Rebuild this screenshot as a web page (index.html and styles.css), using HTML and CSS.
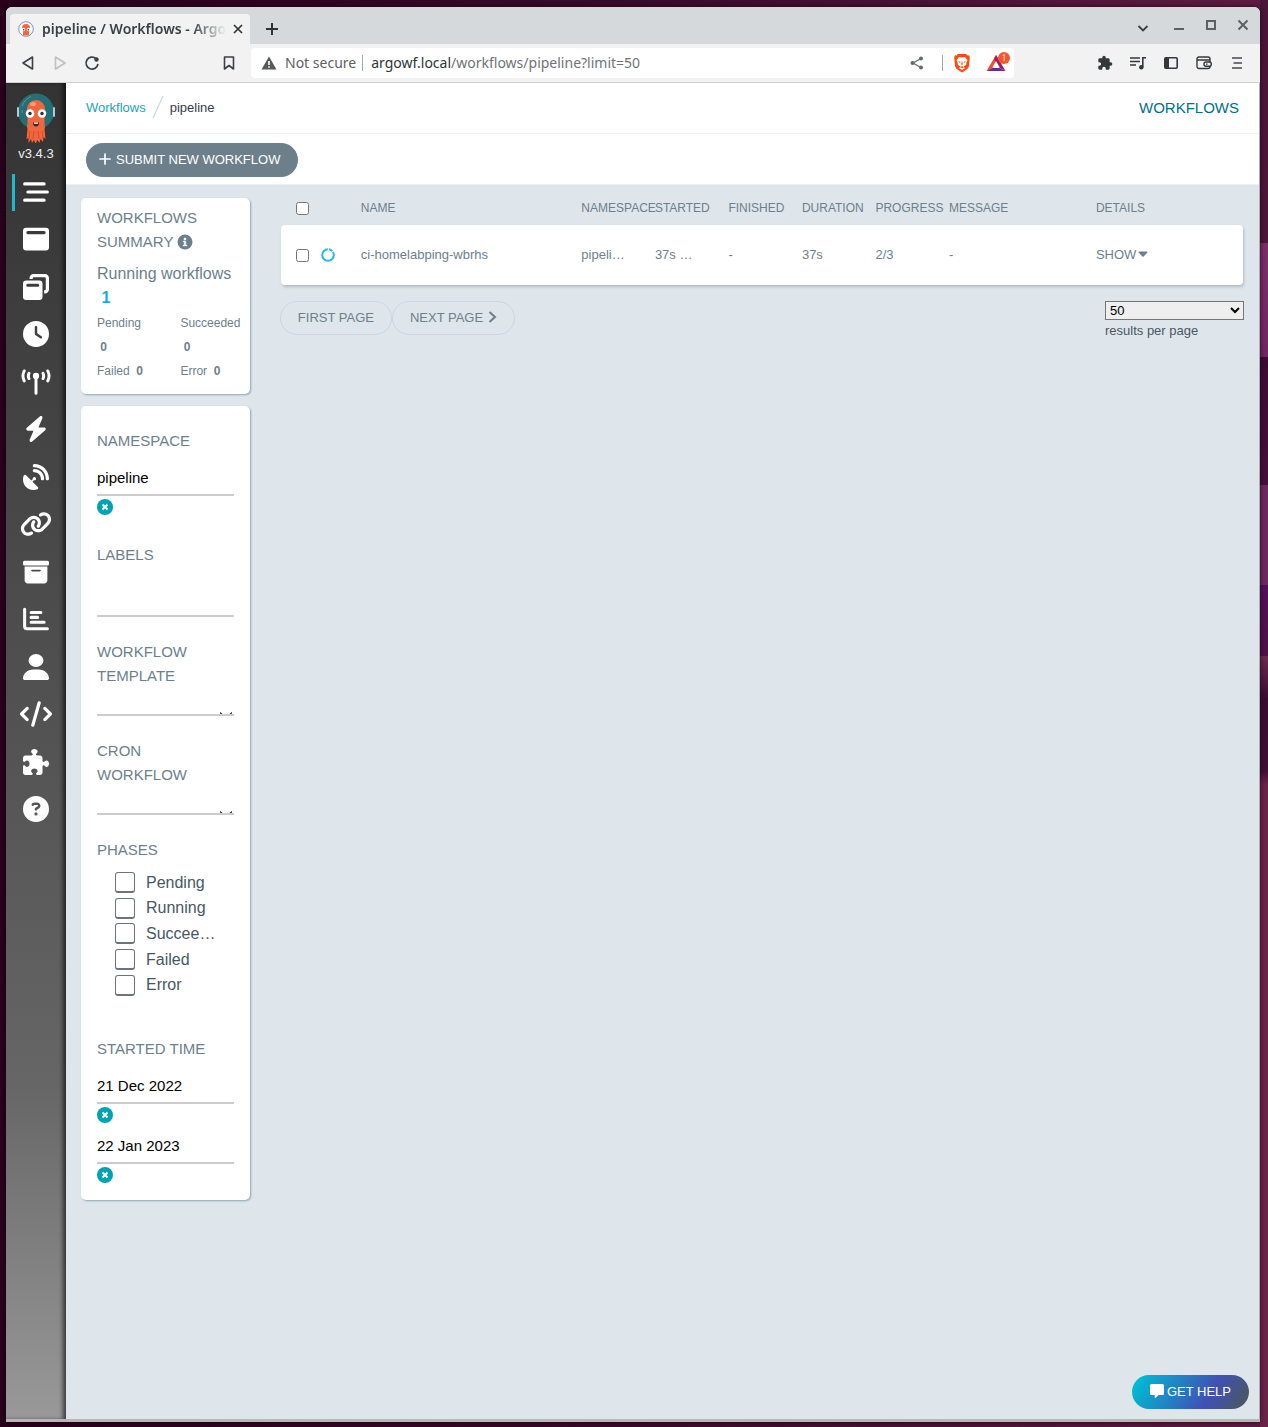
FILE: index.html
```html
<!DOCTYPE html>
<html lang="en">
<head>
<meta charset="utf-8">
<title>pipeline / Workflows - Argo</title>
<link rel="stylesheet" href="styles.css">
</head>
<body>
<div class="window">
  <header class="tabstrip">
    <div class="tab">
      <svg class="tab-icon" width="16" height="16" viewBox="0 0 16 16"><circle cx="8" cy="8" r="7.300" fill="#fff" stroke="#8d86c9"/><path d="M4 7a4 4 0 0 1 8 0c0 2-1 3-1 4v3.500H5V11c0-1-1-2-1-4z" fill="#f2683c"/><circle cx="5.500" cy="8.500" r="1.800" fill="#fff"/><circle cx="10.500" cy="8.500" r="1.800" fill="#fff"/><circle cx="5.700" cy="8.700" r=".8" fill="#333"/><circle cx="10.300" cy="8.700" r=".8" fill="#333"/></svg>
      <span class="tab-title">pipeline / Workflows - Argo</span>
      <button class="chrome-btn tab-close" aria-label="Close tab"><svg width="10" height="10" viewBox="0 0 10 10" fill="none" stroke="#2e3436" stroke-width="1.700"><path d="M1 1l8 8M9 1L1 9"/></svg></button>
    </div>
    <button class="chrome-btn new-tab" aria-label="New tab"><svg width="12" height="12" viewBox="0 0 12 12" fill="none" stroke="#2e3436" stroke-width="2"><path d="M6 0v12M0 6h12"/></svg></button>
    <div class="window-controls">
      <button class="chrome-btn tab-search" aria-label="Search tabs"><svg width="12" height="12" viewBox="0 0 12 12" fill="none" stroke="#3b4043" stroke-width="1.800"><path d="M1.500 5l4.500 4.500L10.500 5"/></svg></button>
      <button class="chrome-btn" aria-label="Minimize"><svg width="12" height="12" viewBox="0 0 12 12"><path d="M1 9h10v2H1z" fill="#5c6063"/></svg></button>
      <button class="chrome-btn" aria-label="Maximize"><svg width="12" height="12" viewBox="0 0 12 12"><path d="M2 2h8v8H2z" fill="none" stroke="#5c6063" stroke-width="2"/></svg></button>
      <button class="chrome-btn" aria-label="Close"><svg width="12" height="12" viewBox="0 0 12 12" fill="none" stroke="#5c6063" stroke-width="2"><path d="M1.500 1.500l9 9M10.500 1.500l-9 9"/></svg></button>
    </div>
  </header>

  <div class="browser-bar">
    <div class="nav-buttons">
      <button class="chrome-btn" aria-label="Back"><svg width="16" height="16" viewBox="0 0 16 16" fill="none" stroke="#3b4043" stroke-width="1.600" stroke-linejoin="round"><path d="M12.500 2v12L3 8z"/></svg></button>
      <button class="chrome-btn" aria-label="Forward" disabled><svg width="16" height="16" viewBox="0 0 16 16" fill="none" stroke="#bdbfc0" stroke-width="1.600" stroke-linejoin="round"><path d="M3.500 2v12L13 8z"/></svg></button>
      <button class="chrome-btn" aria-label="Reload"><svg width="16" height="16" viewBox="0 0 16 16" fill="none" stroke="#3b4043" stroke-width="1.700"><path d="M14 9a6 6 0 1 1-2-5.500"/><circle cx="12.500" cy="4.500" r="2.200" fill="#3b4043" stroke="none"/></svg></button>
    </div>
    <button class="chrome-btn" aria-label="Bookmark"><svg width="16" height="16" viewBox="0 0 16 16" fill="none" stroke="#3b4043" stroke-width="1.600" stroke-linejoin="round"><path d="M3.500 2h9v12L8 10.500 3.500 14z"/></svg></button>
    <div class="address">
      <svg width="16" height="14" viewBox="0 0 16 14"><path d="M8 .5L15.500 13.500H.5z" fill="#55595c"/><path d="M7.200 5h1.600v4H7.200zM7.200 10.200h1.600v1.600H7.200z" fill="#fff"/></svg>
      <span class="not-secure">Not secure</span>
      <span class="url"><b>argowf.local</b>/workflows/pipeline?limit=50</span>
      <button class="chrome-btn share" aria-label="Share"><svg width="14" height="14" viewBox="0 0 14 14"><path d="M11 2.500L3 7l8 4.500" fill="none" stroke="#666a6d" stroke-width="1.300"/><circle cx="11" cy="2.500" r="2" fill="#666a6d"/><circle cx="2.500" cy="7" r="2" fill="#666a6d"/><circle cx="11" cy="11.500" r="2" fill="#666a6d"/></svg></button>
      <span class="address-sep"></span>
      <button class="chrome-btn" aria-label="Shields"><svg width="18" height="20" viewBox="0 0 18 20"><path d="M5 1h8l1.500 1.500 1.500-.2.8 2L16 13q-.5 2-2.500 3.500L9 19.500l-4.500-3Q2.500 15 2 13L1.200 4.300l.8-2 1.500.2z" fill="#fb4a0a"/><path d="M9 4.500L6 4 3.500 7l1 2.500L5 12l2.500 1.500L6 15l3 2 3-2-1.500-1.500L13 12l.5-2.500 1-2.500L12 4z" fill="#fff"/><path d="M5 8l2.500.7L7 10zM13 8l-2.500.7.500 1.300zM9 8l.8 3-.8 1.500-.8-1.500zM7 14l2-.8 2 .8-2 1.200z" fill="#fb4a0a"/></svg></button>
      <button class="chrome-btn rewards" aria-label="Rewards"><svg width="20" height="18" viewBox="0 0 20 18"><path d="M10 1l3 5-6 8-6.500 3z" fill="#ff4724"/><path d="M10 1l9.500 16-6-3L8 5z" fill="#9e1f63"/><path d="M.5 17h19l-6-3h-7z" fill="#662d91"/><path d="M10 7l3.800 6.500H6.200z" fill="#fff"/></svg><span class="badge">1</span></button>
    </div>
    <div class="extensions">
      <button class="chrome-btn" aria-label="Extensions"><svg width="16" height="16" viewBox="0 0 24 24" fill="#33383b"><path d="M20.500 11H19V7c0-1.100-.9-2-2-2h-4V3.500a2.500 2.500 0 0 0-5 0V5H4c-1.100 0-2 .9-2 2v3.800h1.500a2.700 2.700 0 0 1 0 5.400H2V20c0 1.100.9 2 2 2h3.800v-1.500a2.700 2.700 0 0 1 5.400 0V22H17c1.100 0 2-.9 2-2v-4h1.500a2.500 2.500 0 0 0 0-5z"/></svg></button>
      <button class="chrome-btn" aria-label="Playlist"><svg width="16" height="14" viewBox="0 0 16 14" fill="none" stroke="#33383b" stroke-width="1.600"><path d="M0 2h10M0 5.500h10M0 9h6"/><path d="M12.800 11V1.800H16"/><circle cx="11.300" cy="11.200" r="2.200" fill="#33383b" stroke="none"/></svg></button>
      <button class="chrome-btn" aria-label="Sidebar"><svg width="14" height="12" viewBox="0 0 14 12"><rect x=".8" y=".8" width="12.400" height="10.400" rx="1" fill="none" stroke="#33383b" stroke-width="1.600"/><path d="M1 1h4v10H1z" fill="#33383b"/></svg></button>
      <button class="chrome-btn" aria-label="Wallet"><svg width="16" height="14" viewBox="0 0 16 14" fill="none" stroke="#33383b" stroke-width="1.400"><rect x="1" y="1" width="13" height="11.500" rx="2"/><path d="M1 4h13"/><rect x="8" y="6" width="7.300" height="4.200" rx="2" fill="#f2f2f2"/><path d="M10 8.100h1.500"/></svg></button>
      <button class="chrome-btn" aria-label="Menu"><svg width="12" height="14" viewBox="0 0 12 14" fill="none" stroke="#45494c" stroke-width="1.700"><path d="M1 2h10M2.500 7H11M1 12h10"/></svg></button>
    </div>
  </div>

  <div class="app">
    <aside class="sidebar">
      <svg class="logo" width="38" height="50" viewBox="0 0 38 50"><circle cx="19" cy="18.500" r="18" fill="#256e74"/><path d="M5 13Q8 6 14 3.500M5 20v-3" stroke="#58979b" fill="none"/><rect x="0" y="14" width="2" height="10" rx="1" fill="#b5c7d8"/><rect x="36" y="14" width="2" height="10" rx="1" fill="#b5c7d8"/><path d="M10 16a9 9 0 0 1 18 0c0 6-.5 9-.5 13 0 4 1 6 0 7l1 10-2-2-.5 5-2.500-3-1 4-2-3-2 4-1.500-4-2 3-1-4-2.500 4 0-5-2 1 1-10c-1-2 0-4 0-8 0-5-.5-8-.5-12z" fill="#f0673f"/><path d="M13 38l-1 8M17 38l-1 8M21 38l1 8M25 38l1 7" stroke="#c94722" stroke-width=".8"/><ellipse cx="16" cy="11" rx="3" ry="2" fill="#f79a78"/><circle cx="13" cy="20.500" r="4.300" fill="#fff"/><circle cx="25" cy="20.500" r="4.300" fill="#fff"/><circle cx="13" cy="20.500" r="1.700" fill="#263238"/><circle cx="25" cy="20.500" r="1.700" fill="#263238"/><path d="M16 29.500h6q0 4-3 4t-3-4z" fill="#37272a"/><path d="M17 29.500h4v1.300h-4z" fill="#fff"/></svg>
      <div class="version">v3.4.3</div>
      <nav class="side-nav">
        <a href="#" class="active" aria-label="Workflows"><svg width="26" height="26" viewBox="0 0 512 512" fill="none" stroke="#fff" stroke-width="60" stroke-linecap="round"><path d="M32 96h384M96 256h384M32 416h384"/></svg></a>
        <a href="#" aria-label="Workflow templates"><svg width="26" height="26" viewBox="0 0 512 512" fill="#fff"><path fill-rule="evenodd" d="M64 32h384a64 64 0 0 1 64 64v320a64 64 0 0 1-64 64H64a64 64 0 0 1-64-64V96a64 64 0 0 1 64-64zM96 100a30 30 0 0 0 0 60h320a30 30 0 0 0 0-60z"/></svg></a>
        <a href="#" aria-label="Cluster workflow templates"><svg width="26" height="26" viewBox="0 0 512 512" fill="#fff"><path d="M432 64H208c-8.800 0-16 7.200-16 16v16h-64V80c0-44.200 35.800-80 80-80h224c44.200 0 80 35.800 80 80v224c0 44.200-35.800 80-80 80h-16v-64h16c8.800 0 16-7.200 16-16V80c0-8.800-7.200-16-16-16z"/><path fill-rule="evenodd" d="M64 128h256a64 64 0 0 1 64 64v256a64 64 0 0 1-64 64H64a64 64 0 0 1-64-64V192a64 64 0 0 1 64-64zM94 192a30 30 0 0 0 0 60h196a30 30 0 0 0 0-60z"/></svg></a>
        <a href="#" aria-label="Cron workflows"><svg width="26" height="26" viewBox="0 0 512 512" fill="#fff"><path fill-rule="evenodd" d="M256 0a256 256 0 1 1 0 512A256 256 0 1 1 256 0zM232 120V256c0 8 4 15.500 10.700 20l96 64c11 7.400 25.900 4.400 33.300-6.700s4.400-25.900-6.700-33.300L280 243.200V120c0-13.300-10.700-24-24-24s-24 10.700-24 24z"/></svg></a>
        <a href="#" aria-label="Event flow"><svg width="30" height="26" viewBox="0 0 576 512" fill="none" stroke="#fff" stroke-width="58" stroke-linecap="round"><path d="M56 38C24 100 24 172 56 234M520 38c32 62 32 134 0 196M150 84c-18 36-18 68 0 104M426 84c18 36 18 68 0 104M288 150v330"/><circle cx="288" cy="136" r="62" fill="#fff" stroke="none"/></svg></a>
        <a href="#" aria-label="Event sources"><svg width="24" height="26" viewBox="0 0 448 512" fill="#fff"><path d="M349.400 44.600c5.900-13.700 1.500-29.700-10.600-38.500s-28.600-8-39.900 1.800l-256 224c-10 8.800-13.600 22.900-8.900 35.300S50.700 288 64 288H175.500L98.600 467.400c-5.900 13.700-1.500 29.700 10.600 38.500s28.600 8 39.900-1.800l256-224c10-8.800 13.600-22.900 8.900-35.300s-16.600-20.700-30-20.700H272.500L349.400 44.600z"/></svg></a>
        <a href="#" aria-label="Sensors"><svg width="26" height="26" viewBox="0 0 512 512" fill="#fff"><path d="M192 32c0-17.700 14.300-32 32-32C383.100 0 512 128.900 512 288c0 17.700-14.300 32-32 32s-32-14.300-32-32C448 164.300 347.700 64 224 64c-17.700 0-32-14.300-32-32zM60.600 220.600L164.700 324.700l28.400-28.400c-.7-2.600-1.100-5.400-1.100-8.300c0-17.700 14.300-32 32-32s32 14.300 32 32s-14.300 32-32 32c-2.900 0-5.600-.4-8.300-1.100l-28.400 28.400L291.400 451.400c14.500 14.500 11.800 38.800-7.300 46.300C260.500 506.900 234.900 512 208 512C93.100 512 0 418.900 0 304c0-26.900 5.100-52.500 14.400-76.100c7.500-19 31.800-21.800 46.300-7.300zM224 96c106 0 192 86 192 192c0 17.700-14.300 32-32 32s-32-14.300-32-32c0-70.700-57.300-128-128-128c-17.700 0-32-14.300-32-32s14.300-32 32-32z"/></svg></a>
        <a href="#" aria-label="Pipelines"><svg width="32" height="26" viewBox="0 0 640 512" fill="#fff"><path d="M579.800 267.700c56.500-56.500 56.500-148 0-204.500c-50-50-128.800-56.500-186.300-15.400l-1.600 1.100c-14.400 10.300-17.700 30.300-7.400 44.600s30.300 17.700 44.600 7.400l1.600-1.100c32.100-22.900 76-19.300 103.800 8.600c31.500 31.500 31.500 82.500 0 114L422.300 334.800c-31.500 31.500-82.500 31.500-114 0c-27.900-27.900-31.500-71.800-8.600-103.800l1.100-1.600c10.300-14.400 6.900-34.400-7.400-44.600s-34.400-6.900-44.600 7.400l-1.100 1.600C206.500 251.200 213 330 263 380c56.500 56.500 148 56.500 204.500 0L579.800 267.700zM60.200 244.300c-56.500 56.500-56.500 148 0 204.500c50 50 128.800 56.500 186.300 15.400l1.600-1.100c14.400-10.300 17.700-30.300 7.400-44.600s-30.300-17.700-44.600-7.400l-1.600 1.100c-32.100 22.900-76 19.300-103.800-8.600C74 372 74 321 105.500 289.500L217.700 177.200c31.500-31.500 82.500-31.500 114 0c27.900 27.900 31.500 71.800 8.600 103.900l-1.100 1.600c-10.300 14.400-6.900 34.400 7.400 44.600s34.400 6.900 44.600-7.400l1.100-1.600C433.500 260.800 427 182 377 132c-56.500-56.500-148-56.500-204.500 0L60.200 244.300z"/></svg></a>
        <a href="#" aria-label="Archived workflows"><svg width="26" height="26" viewBox="0 0 512 512" fill="#fff"><path fill-rule="evenodd" d="M32 32H480c17.700 0 32 14.300 32 32V96c0 17.700-14.300 32-32 32H32C14.300 128 0 113.700 0 96V64C0 46.300 14.300 32 32 32zm0 116H480V416c0 35.300-28.700 64-64 64H96c-35.300 0-64-28.700-64-64V148zm128 80c0 8.800 7.200 16 16 16H336c8.800 0 16-7.200 16-16s-7.200-16-16-16H176c-8.800 0-16 7.200-16 16z"/></svg></a>
        <a href="#" aria-label="Reports"><svg width="26" height="26" viewBox="0 0 512 512" fill="none" stroke="#fff" stroke-width="60" stroke-linecap="round" stroke-linejoin="round"><path d="M32 64v336q0 48 48 48h400M160 128h192M160 224h128M160 320h256"/></svg></a>
        <a href="#" aria-label="User"><svg width="26" height="26" viewBox="0 0 448 512" preserveAspectRatio="none" fill="#fff"><path d="M224 256A128 128 0 1 0 224 0a128 128 0 1 0 0 256zm-45.700 48C79.800 304 0 383.800 0 482.300C0 498.700 13.300 512 29.700 512H418.300c16.400 0 29.700-13.300 29.700-29.700C448 383.800 368.200 304 269.700 304H178.300z"/></svg></a>
        <a href="#" aria-label="API docs"><svg width="32" height="26" viewBox="0 0 640 512" fill="#fff"><path d="M392.800 1.200c-17-4.900-34.700 5-39.600 22l-128 448c-4.900 17 5 34.700 22 39.600s34.700-5 39.600-22l128-448c4.900-17-5-34.700-22-39.600zm80.600 120.100c-12.500 12.500-12.500 32.800 0 45.300L562.700 256l-89.400 89.400c-12.500 12.500-12.500 32.800 0 45.300s32.800 12.500 45.300 0l112-112c12.500-12.500 12.500-32.800 0-45.300l-112-112c-12.500-12.500-32.800-12.500-45.300 0zm-306.700 0c-12.500-12.500-32.800-12.500-45.300 0l-112 112c-12.500 12.500-12.500 32.800 0 45.300l112 112c12.500 12.500 32.800 12.500 45.300 0s12.500-32.800 0-45.300L77.300 256l89.400-89.400c12.500-12.500 12.500-32.800 0-45.300z"/></svg></a>
        <a href="#" aria-label="Plugins"><svg width="26" height="26" viewBox="0 0 512 512" fill="#fff"><path d="M192 104.800c0-9.200-5.800-17.300-13.200-22.800C167.200 73.300 160 61.300 160 48c0-26.500 28.700-48 64-48s64 21.500 64 48c0 13.300-7.200 25.300-18.800 34c-7.400 5.500-13.200 13.600-13.200 22.800v0c0 12.800 10.400 23.200 23.200 23.200H336c26.500 0 48 21.500 48 48v56.800c0 12.800 10.400 23.200 23.200 23.200v0c9.200 0 17.300-5.800 22.800-13.200c8.700-11.600 20.700-18.800 34-18.800c26.500 0 48 28.700 48 64s-21.500 64-48 64c-13.300 0-25.300-7.200-34-18.800c-5.500-7.400-13.600-13.200-22.800-13.200v0c-12.800 0-23.200 10.400-23.200 23.200V464c0 26.500-21.500 48-48 48H279.200c-12.800 0-23.200-10.400-23.200-23.200v0c0-9.200 5.800-17.300 13.200-22.800c11.600-8.700 18.800-20.700 18.800-34c0-26.500-28.700-48-64-48s-64 21.500-64 48c0 13.300 7.200 25.300 18.800 34c7.400 5.500 13.200 13.600 13.200 22.800v0c0 12.800-10.400 23.200-23.200 23.200H48c-26.500 0-48-21.500-48-48V343.200C0 330.400 10.400 320 23.200 320v0c9.200 0 17.300 5.800 22.800 13.200C54.700 344.800 66.700 352 80 352c26.500 0 48-28.700 48-64s-21.500-64-48-64c-13.300 0-25.300 7.200-34 18.800C40.500 250.200 32.400 256 23.200 256v0C10.400 256 0 245.600 0 232.800V176c0-26.500 21.500-48 48-48H168.800c12.800 0 23.200-10.400 23.200-23.200v0z"/></svg></a>
        <a href="#" aria-label="Help"><svg width="26" height="26" viewBox="0 0 512 512" fill="#fff"><path fill-rule="evenodd" d="M256 512A256 256 0 1 0 256 0a256 256 0 1 0 0 512zM169.800 165.300c7.900-22.300 29.100-37.300 52.800-37.300h58.300c34.900 0 63.100 28.300 63.100 63.100c0 22.600-12.100 43.500-31.700 54.800L280 264.400c-.2 13-10.900 23.600-24 23.600c-13.300 0-24-10.700-24-24V250.500c0-8.600 4.600-16.500 12.100-20.800l44.300-25.400c4.700-2.700 7.600-7.700 7.600-13.100c0-8.400-6.800-15.100-15.100-15.100H222.600c-3.400 0-6.400 2.100-7.500 5.300l-.4 1.200c-4.400 12.500-18.200 19-30.600 14.600s-19-18.200-14.600-30.600l.4-1.200zM224 352a32 32 0 1 1 64 0 32 32 0 1 1 -64 0z"/></svg></a>
      </nav>
    </aside>

    <main class="main">
      <div class="topbar">
        <nav class="breadcrumb"><a href="#">Workflows</a><svg width="12" height="24" viewBox="0 0 12 24"><path d="M1 23L11 1" stroke="#ccd6dd" stroke-width="1.200"/></svg><span>pipeline</span></nav>
        <span class="page-title">WORKFLOWS</span>
      </div>
      <div class="actions">
        <button class="pill primary"><svg width="12" height="12" viewBox="0 0 12 12" stroke="#fff" stroke-width="1.700" stroke-linecap="round"><path d="M6 1v10M1 6h10"/></svg>SUBMIT NEW WORKFLOW</button>
      </div>
      <div class="content">
        <div class="filters">
          <section class="card summary">
            <h2>WORKFLOWS SUMMARY <svg class="info" width="16" height="16" viewBox="0 0 16 16"><circle cx="8" cy="8" r="7.500" fill="#6d7f8b"/><path d="M6.300 7h2.500v4H10v1H6v-1h1.200V8h-.9zM7 4h2v2H7z" fill="#fff" stroke="#fff" stroke-width=".4"/></svg></h2>
            <p class="running">Running workflows <b>&nbsp;1</b></p>
            <div class="counts">
              <div>Pending <b>&nbsp;0</b></div>
              <div>Succeeded <b>&nbsp;0</b></div>
              <div>Failed <b>&nbsp;0</b></div>
              <div>Error <b>&nbsp;0</b></div>
            </div>
          </section>
          <form class="card filter-form">
            <div class="field">
              <label for="namespace">NAMESPACE</label>
              <input class="line-input spaced" id="namespace" type="text" value="pipeline">
              <button type="button" class="clear" aria-label="Clear namespace"><svg width="16" height="16" viewBox="0 0 16 16"><circle cx="8" cy="8" r="8" fill="#00a2b3"/><path d="M5.500 5.500l5 5M10.500 5.500l-5 5" stroke="#fff" stroke-width="2"/></svg></button>
            </div>
            <div class="field">
              <label for="labels">LABELS</label>
              <input class="line-input tags" id="labels" type="text">
            </div>
            <div class="field">
              <label for="template">WORKFLOW TEMPLATE</label>
              <div class="select-wrap"><select class="line-select" id="template"><option></option></select><svg width="12" height="2" viewBox="0 0 12 2" fill="none" stroke="#333" stroke-width="1.400"><path d="M0 .5l6 6 6-6"/></svg></div>
            </div>
            <div class="field">
              <label for="cron">CRON WORKFLOW</label>
              <div class="select-wrap"><select class="line-select" id="cron"><option></option></select><svg width="12" height="2" viewBox="0 0 12 2" fill="none" stroke="#333" stroke-width="1.400"><path d="M0 .5l6 6 6-6"/></svg></div>
            </div>
            <fieldset class="field">
              <legend>PHASES</legend>
              <div class="phases">
                <label><input type="checkbox"><span>Pending</span></label>
                <label><input type="checkbox"><span>Running</span></label>
                <label><input type="checkbox"><span>Succeeded</span></label>
                <label><input type="checkbox"><span>Failed</span></label>
                <label><input type="checkbox"><span>Error</span></label>
              </div>
            </fieldset>
            <div class="field">
              <label for="started-from">STARTED TIME</label>
              <input class="line-input spaced" id="started-from" type="text" value="21 Dec 2022">
              <button type="button" class="clear" aria-label="Clear start date"><svg width="16" height="16" viewBox="0 0 16 16"><circle cx="8" cy="8" r="8" fill="#00a2b3"/><path d="M5.500 5.500l5 5M10.500 5.500l-5 5" stroke="#fff" stroke-width="2"/></svg></button>
              <input class="line-input" aria-label="Started before" type="text" value="22 Jan 2023">
              <button type="button" class="clear" aria-label="Clear end date"><svg width="16" height="16" viewBox="0 0 16 16"><circle cx="8" cy="8" r="8" fill="#00a2b3"/><path d="M5.500 5.500l5 5M10.500 5.500l-5 5" stroke="#fff" stroke-width="2"/></svg></button>
            </div>
          </form>
        </div>

        <div class="list">
          <table class="workflows">
            <thead>
              <tr><th><input type="checkbox" aria-label="Select all"></th><th>NAME</th><th>NAMESPACE</th><th>STARTED</th><th>FINISHED</th><th>DURATION</th><th>PROGRESS</th><th>MESSAGE</th><th>DETAILS</th></tr>
            </thead>
            <tbody>
              <tr><td><input type="checkbox" aria-label="Select ci-homelabping-wbrhs"><svg width="14" height="14" viewBox="0 0 14 14" fill="none" stroke="#2ab7ee" stroke-width="2"><circle cx="7" cy="7" r="5.800" stroke-dasharray="26.500 1.200 3.500 1.200 4.100 0"/></svg></td><td>ci-homelabping-wbrhs</td><td><span class="clip">pipeline</span></td><td><span class="clip">37s ago</span></td><td>-</td><td>37s</td><td>2/3</td><td>-</td><td><a class="show" href="#">SHOW<svg width="10" height="6" viewBox="0 0 10 6"><path d="M1.200.5h7.600q1 .4.400 1.300L5.600 5.400q-.6.500-1.200 0L.8 1.800Q.2.900 1.200.5z" fill="#6d7f8b"/></svg></a></td></tr>
            </tbody>
          </table>
          <div class="pagination">
            <div class="pages">
              <button class="pill outline">FIRST PAGE</button><button class="pill outline">NEXT PAGE <svg width="9" height="12" viewBox="0 0 9 12" fill="none" stroke="#6d7f8b" stroke-width="2"><path d="M1.500 1L7 6l-5.500 5"/></svg></button>
            </div>
            <div class="per-page">
              <select id="limit"><option>50</option></select>
              <label for="limit">results per page</label>
            </div>
          </div>
        </div>
      </div>
    </main>
    <button class="pill help"><svg width="14" height="14" viewBox="0 0 14 14" fill="#fff"><path d="M1.500 0h11A1.500 1.500 0 0 1 14 1.500v8a1.500 1.500 0 0 1-1.500 1.500H8.500L5.500 14l-.8-.5V11H1.500A1.500 1.500 0 0 1 0 9.500v-8A1.500 1.500 0 0 1 1.500 0z"/></svg>GET HELP</button>
  </div>
</div>
</body>
</html>
```
FILE: styles.css
```css
* { box-sizing: border-box; }

body {
  margin: 0;
  min-height: 100vh;
  display: flex;
  padding: 7px 8px 5px 6px;
  background:
    linear-gradient(#4a1538 0, #4d1739 17%, #7a2f68 17%, #702862 25%, #3d0c33 25%, #45103a 34%, #6d2a60 34%, #6d2a60 41%, #54105a 41%, #4d1245 46%, #6b2b50 46%, #3a0d30 49%, #3f1034 54%, #6b2449 55%, #6b2449 100%) right / 8px 100% no-repeat,
    linear-gradient(90deg, #28011b 0, #3a0a2a 50%, #5d1c43 100%);
  font-family: "Liberation Sans", Arial, sans-serif;
  font-size: 13px;
  color: #495763;
}

button, input, select { font-family: inherit; }
svg { display: block; flex: none; }

/* browser frame */
.window {
  flex: 1;
  min-width: 0;
  display: flex;
  flex-direction: column;
  border-radius: 6px 6px 0 0;
  overflow: hidden;
  border-bottom: 3px solid #b9b6b8;
  background: #f2f2f2;
  box-shadow: 0 0 5px rgba(26, 0, 17, .8);
}
.chrome-btn {
  border: 0;
  padding: 0;
  background: none;
  display: flex;
  align-items: center;
  justify-content: center;
}
.tabstrip {
  height: 37px;
  padding-left: 4px;
  display: flex;
  align-items: flex-end;
  background: #d5d9dc;
  font-family: "Noto Sans", "Open Sans", sans-serif;
}
.tab {
  width: 240px;
  height: 30px;
  padding: 0 7px 0 8px;
  display: flex;
  align-items: center;
  border-radius: 4px 4px 0 0;
  background: #f2f2f2;
}
.tab-title {
  flex: 1;
  margin: 0 3px 2px 8px;
  overflow: hidden;
  white-space: nowrap;
  font-size: 14px;
  font-weight: 600;
  color: #3b4043;
  -webkit-mask-image: linear-gradient(90deg, #000 80%, transparent 98%);
  mask-image: linear-gradient(90deg, #000 80%, transparent 98%);
}
.new-tab { margin: 0 0 9px 16px; }
.window-controls {
  margin: 0 11px 11px auto;
  display: flex;
  gap: 20px;
}
.tab-search { margin-right: 4px; padding-top: 4px; }

.browser-bar {
  height: 39px;
  padding: 0 15px 0 14px;
  display: flex;
  align-items: center;
  border-bottom: 1px solid #d0d0d0;
  font-family: "Noto Sans", "Open Sans", sans-serif;
  font-size: 14px;
}
.nav-buttons { display: flex; gap: 16px; margin-right: 121px; }
.address {
  flex: 1;
  height: 30px;
  margin: 0 83px 0 14px;
  padding: 0 4px 0 10px;
  display: flex;
  align-items: center;
  border-radius: 4px;
  background: #fff;
  color: #6f7376;
}
.not-secure, .url { line-height: 16px; white-space: nowrap; }
.not-secure {
  margin-left: 8px;
  padding-right: 6px;
  border-right: 1px solid #a5a8aa;
  color: #5c6063;
}
.url { margin-left: 8px; }
.url b { font-weight: 400; color: #2e3436; }
.share { margin-left: auto; }
.address-sep { width: 1px; height: 16px; margin: 0 10px 0 18px; background: #a5a8aa; }
.rewards { position: relative; margin-left: 15px; padding-right: 4px; }
.badge {
  position: absolute;
  top: -2px;
  right: 0;
  width: 12px;
  height: 12px;
  border-radius: 6px;
  background: #fb542b;
  color: #fff;
  font-size: 8px;
  line-height: 12px;
}
.extensions { display: flex; align-items: center; gap: 17px; }
.extensions .chrome-btn { width: 16px; }

/* application */
.app { position: relative; flex: 1; display: flex; }
.sidebar {
  flex: none;
  width: 60px;
  padding-top: 10px;
  background: linear-gradient(#333 0, #464646 30%, #585858 56%, #666 75%, #999 100%);
  box-shadow: inset -4px 0 4px -1px rgba(0, 0, 0, .6);
}
.logo { margin: 0 auto; }
.version {
  line-height: 22px;
  margin-bottom: 3px;
  text-align: center;
  color: #eee;
}
.side-nav {
  height: 665px;
  display: flex;
  flex-direction: column;
}
.side-nav a {
  flex: 1;
  display: flex;
  align-items: center;
  justify-content: center;
}
.side-nav .active {
  background: linear-gradient(#1fb8cc, #1fb8cc) 6px 6px / 3px 37px no-repeat;
}

.main {
  flex: 1;
  min-width: 0;
  border-right: 1px solid #a9afb3;
  background: #dee6eb;
}
.topbar, .actions {
  height: 51px;
  padding: 0 20px;
  display: flex;
  align-items: center;
  background: #fff;
  border-bottom: 1px solid #edf0f2;
}
.topbar { justify-content: space-between; padding-bottom: 2px; }
.actions { padding-top: 2px; }
.breadcrumb { display: flex; align-items: center; gap: 6px; color: #363c4a; }
.breadcrumb a { color: #1aa5b8; text-decoration: none; }
.page-title { font-size: 15px; color: #006f8a; }

.pill {
  height: 34px;
  border: 1px solid transparent;
  border-radius: 17px;
  padding: 0 17px 2px;
  display: inline-flex;
  align-items: center;
  gap: 5px;
  font-size: 13px;
  white-space: nowrap;
}
.primary { padding: 0 17px 2px 12px; background: #6d7f8b; color: #fff; }
.outline { background: transparent; border-color: #ccd6dd; color: #6d7f8b; }
.help {
  position: absolute;
  right: 11px;
  bottom: 10px;
  gap: 3px;
  border: 0;
  padding: 0 18px 2px;
  background: linear-gradient(120deg, #00bcd4 5%, #3f51b5 65%, #495763 95%);
  color: #fff;
}

.content {
  display: grid;
  grid-template-columns: minmax(0, 2fr) minmax(0, 10fr);
}
.filters { padding: 13px 15px; }
.card {
  margin-bottom: 12px;
  padding: 0 16px 12px;
  border-radius: 5px;
  background: #fff;
  box-shadow: 1px 1px 2px #8fa4b1;
  line-height: 24px;
  color: #6d7f8b;
}
.summary { padding: 8px 16px 11px; }
.summary h2 { margin: 0 0 8px; font-size: 15px; font-weight: 400; }
.info { display: inline-block; vertical-align: -3px; }
.running { margin: 0 0 1px; font-size: 16px; }
.running b { color: #0dadea; }
.counts {
  display: grid;
  grid-template-columns: repeat(2, minmax(0, 1fr));
  column-gap: 30px;
  font-size: 12px;
}
.field {
  margin: 0;
  border: 0;
  padding: 23px 0 0;
  font-size: 15px;
}
.field > label { display: block; }
.field legend { padding: 0; float: left; width: 100%; }
.line-input {
  display: block;
  width: 100%;
  height: 36px;
  padding: 0;
  border: 0;
  border-bottom: 2px solid #ccc;
  background: none;
  font-size: 15px;
  color: #000;
}
.spaced { margin-top: 7px; }
.tags { margin-top: 14px; }
.clear {
  display: block;
  height: 24px;
  padding: 3px 0 5px;
  border: 0;
  background: none;
}
.select-wrap { position: relative; }
.line-select {
  display: block;
  width: 100%;
  height: 28px;
  appearance: none;
  border: 0;
  border-bottom: 2px solid #ccc;
  border-radius: 0;
  background: none;
  font-size: 15px;
}
.select-wrap svg { position: absolute; right: 2px; bottom: 2px; }
.phases {
  clear: both;
  height: 152px;
  padding: 8px 18px 16px;
  display: grid;
  grid-template-rows: repeat(5, 1fr);
  font-size: 16px;
  color: #495763;
}
.phases label { display: flex; align-items: center; gap: 11px; min-width: 0; }
.phases span { overflow: hidden; text-overflow: ellipsis; white-space: nowrap; }
.phases input {
  flex: none;
  appearance: none;
  width: 20px;
  height: 21px;
  margin: 0;
  border: 1px solid #6b747a;
  border-bottom-width: 2px;
  border-radius: 3px;
  background: #fff;
}

.list { padding: 6px 15px; }
.workflows { display: block; padding: 0 1px; color: #6d7f8b; }
.workflows thead, .workflows tbody { display: block; }
.workflows tr {
  display: grid;
  grid-template-columns: 80px minmax(0, 3fr) repeat(5, minmax(0, 1fr)) repeat(2, minmax(0, 2fr));
  align-items: center;
  height: 34px;
}
.workflows th { padding: 0; font-size: 12px; font-weight: 400; text-align: left; }
.workflows td { padding: 0 0 2px; white-space: nowrap; }
.workflows th:first-child, .workflows td:first-child {
  display: flex;
  align-items: center;
  gap: 12px;
  padding: 0 0 0 15px;
}
.workflows input { width: 13px; height: 13px; margin: 0; }
.workflows tbody tr {
  height: 60px;
  border-radius: 4px;
  background: #fff;
  box-shadow: 1px 2px 3px rgba(109, 127, 139, .4);
}
.clip {
  display: block;
  width: 44px;
  overflow: hidden;
  text-overflow: ellipsis;
}
.show { color: inherit; text-decoration: none; }
.show svg { display: inline-block; vertical-align: 2px; margin-left: 2px; }
.pagination {
  margin-top: 16px;
  display: flex;
  justify-content: space-between;
}
.pages { display: flex; }
.per-page { width: 139px; }
.per-page select {
  display: block;
  width: 100%;
  height: 19px;
  padding: 0;
  border: 1px solid #767676;
  border-radius: 0;
  background: #efefef;
  font-size: 13px;
  color: #000;
}
.per-page label { display: block; line-height: 22px; }
```
